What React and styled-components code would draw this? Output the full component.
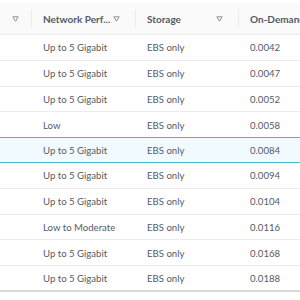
import React from "react";
import styled, { createGlobalStyle } from "styled-components";

const rows = [
  { net: "Up to 5 Gigabit", storage: "EBS only", price: "0.0042" },
  { net: "Up to 5 Gigabit", storage: "EBS only", price: "0.0047" },
  { net: "Up to 5 Gigabit", storage: "EBS only", price: "0.0052" },
  { net: "Low", storage: "EBS only", price: "0.0058" },
  { net: "Up to 5 Gigabit", storage: "EBS only", price: "0.0084", selected: true },
  { net: "Up to 5 Gigabit", storage: "EBS only", price: "0.0094" },
  { net: "Up to 5 Gigabit", storage: "EBS only", price: "0.0104" },
  { net: "Low to Moderate", storage: "EBS only", price: "0.0116" },
  { net: "Up to 5 Gigabit", storage: "EBS only", price: "0.0168" },
  { net: "Up to 5 Gigabit", storage: "EBS only", price: "0.0188" },
];

function FilterIcon() {
  return (
    <svg width="7" height="6" viewBox="0 0 7 6">
      <path d="M0.8 0.8 H6.2 L3.5 5.2 Z" fill="none" stroke="#879596" strokeWidth="1" strokeLinejoin="round" />
    </svg>
  );
}

export default function App() {
  return (
    <>
      <GlobalStyle />
      <Table>
        <Header>
          <HeadCell $w="31px" $first>
            <FilterIcon />
          </HeadCell>
          <HeadCell $w="104px">
            <span>Network Perf...</span>
            <FilterIcon />
          </HeadCell>
          <HeadCell $w="103px">
            <span>Storage</span>
            <FilterIcon />
          </HeadCell>
          <HeadCell $w="110px" $last>
            <span>On-Demand</span>
          </HeadCell>
        </Header>
        {rows.map((r, i) => (
          <Row key={i} $selected={r.selected} $last={i === rows.length - 1}>
            <Cell $w="31px" />
            <Cell $w="104px">{r.net}</Cell>
            <Cell $w="103px">{r.storage}</Cell>
            <Cell $w="110px">{r.price}</Cell>
          </Row>
        ))}
      </Table>
    </>
  );
}

const GlobalStyle = createGlobalStyle`
  body {
    margin: 0;
    background: #ffffff;
    font-family: Lato, "Open Sans", Arial, sans-serif;
    overflow: hidden;
  }
`;

const Table = styled.div`
  width: 300px;
  padding-top: 3px;
  overflow: hidden;
`;

const Header = styled.div`
  display: flex;
  height: 31px;
  background: #fafafa;
  border-bottom: 1px solid #eaeded;
`;

const HeadCell = styled.div`
  flex: 0 0 ${(p) => p.$w};
  display: flex;
  align-items: center;
  justify-content: ${(p) => (p.$first ? "flex-start" : "space-between")};
  padding: ${(p) => (p.$first ? "0 0 0 12px" : "0 15px 0 12px")};
  box-sizing: border-box;
  font-size: 10px;
  font-weight: 700;
  color: #545b64;
  white-space: nowrap;
  position: relative;
  &::after {
    content: "";
    display: ${(p) => (p.$last ? "none" : "block")};
    position: absolute;
    right: -1px;
    top: 6px;
    bottom: 6px;
    width: 1px;
    background: #eaeded;
  }
  svg {
    flex: none;
    margin-top: 1px;
  }
`;

const Row = styled.div`
  display: flex;
  height: 25.8px;
  box-sizing: border-box;
  background: ${(p) => (p.$selected ? "#f1faff" : "#ffffff")};
  border-top: 1px solid ${(p) => (p.$selected ? "#44b9d6" : "transparent")};
  border-bottom: ${(p) =>
    p.$last ? "2px solid #d5dbdb" : p.$selected ? "1px solid #44b9d6" : "1px solid #eaeded"};
  margin-top: ${(p) => (p.$selected ? "-1px" : "0")};
`;

const Cell = styled.div`
  flex: 0 0 ${(p) => p.$w};
  display: flex;
  align-items: center;
  padding-left: 12px;
  box-sizing: border-box;
  font-size: 9.6px;
  color: #545b64;
  white-space: nowrap;
`;
